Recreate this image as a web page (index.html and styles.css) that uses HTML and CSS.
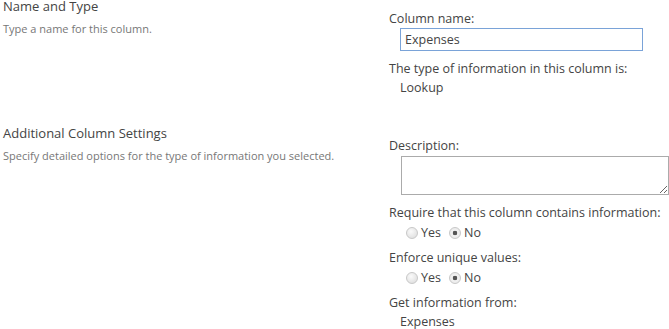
FILE: index.html
```html
<!DOCTYPE html>
<html lang="en">

<head>
    <meta charset="UTF-8" />
    <title>Column Settings</title>
    <link rel="stylesheet" href="styles.css">
</head>

<body>
    <div class="page">
        <!-- Name and Type -->
        <div class="section first">
            <div class="side">
                <h3>Name and Type</h3>
                <p>Type a name for this column.</p>
            </div>
            <div class="fields">
                <div class="label">Column name:</div>
                <input class="name-input" type="text" value="Expenses" />
                <div class="label">The type of information in this column is:</div>
                <div class="value">Lookup</div>
            </div>
        </div>

        <!-- Additional Column Settings -->
        <div class="section second">
            <div class="side">
                <h3>Additional Column Settings</h3>
                <p>Specify detailed options for the type of information you selected.</p>
            </div>
            <div class="fields">
                <div class="label">Description:</div>
                <textarea class="desc"></textarea>
                <div class="label">Require that this column contains information:</div>
                <div class="radios">
                    <label><input type="radio" name="req" /> Yes</label>
                    <label><input type="radio" name="req" checked /> No</label>
                </div>
                <div class="label">Enforce unique values:</div>
                <div class="radios">
                    <label><input type="radio" name="uniq" /> Yes</label>
                    <label><input type="radio" name="uniq" checked /> No</label>
                </div>
                <div class="label">Get information from:</div>
                <div class="value">Expenses</div>
            </div>
        </div>
    </div>
</body>

</html>
```

FILE: styles.css
```css
* {
    margin: 0;
    padding: 0;
    box-sizing: border-box;
}

body {
    font-family: "Segoe UI", "Open Sans", "Noto Sans", sans-serif;
    color: #444;
    background: #fff;
    overflow: hidden;
}

.section {
    display: flex;
}

.side {
    width: 389px;
    padding-left: 3px;
}

.side h3 {
    font-weight: normal;
    font-size: 13px;
    line-height: 18px;
    color: #444;
}

.first .side h3 {
    line-height: 12px;
}

.side p {
    font-size: 11px;
    line-height: 15px;
    color: #777;
    margin-top: 6px;
}

.first .side p {
    margin-top: 9px;
}

.fields {
    flex: 1;
}

.first .fields {
    padding-top: 9px;
}

.second {
    margin-top: 27px;
}

.second .fields {
    padding-top: 12px;
}

.label {
    font-size: 12.5px;
    line-height: 19px;
}

.value {
    font-size: 12.5px;
    line-height: 19px;
    padding-left: 11px;
}

.name-input {
    display: block;
    margin: 0 0 8px 11px;
    width: 243px;
    height: 23px;
    border: 1px solid #7aa3d8;
    padding-left: 4px;
    font: 12.5px "Segoe UI", "Open Sans", sans-serif;
    color: #444;
    outline: none;
}

.desc {
    display: block;
    margin: 1px 0 8px 12px;
    width: 268px;
    height: 39px;
    border: 1px solid #ababab;
    resize: vertical;
    outline: none;
}

.radios {
    display: flex;
    gap: 8px;
    padding-left: 17px;
    padding-bottom: 4px;
    font-size: 12.5px;
    line-height: 22px;
    height: 26px;
}

.radios label {
    display: flex;
    align-items: center;
    gap: 3px;
}

.radios input {
    appearance: none;
    width: 12px;
    height: 12px;
    border-radius: 50%;
    border: 1px solid #c8c8c8;
    background: radial-gradient(circle at 40% 35%, #fafafa, #dadada);
}

.radios input:checked {
    background: radial-gradient(circle, #555 0, #555 2px, #f2f2f2 2.6px, #e4e4e4 100%);
}
```
